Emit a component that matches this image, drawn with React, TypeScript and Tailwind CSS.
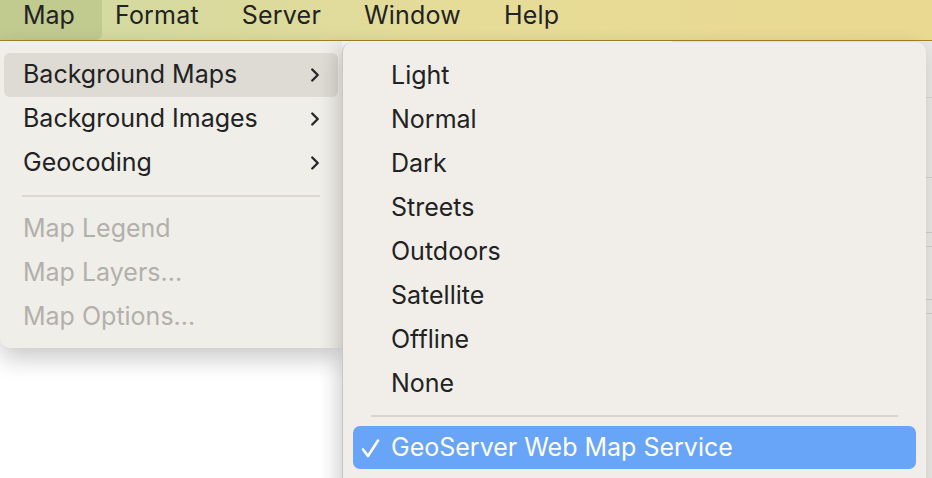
import { ChevronRight } from "lucide-react";

const font = { fontFamily: "Inter, 'Noto Sans', sans-serif" };

const mainItems = [
  { label: "Background Maps", sub: true, active: true },
  { label: "Background Images", sub: true },
  { label: "Geocoding", sub: true },
];

const disabledItems = ["Map Legend", "Map Layers...", "Map Options..."];

const mapStyles = ["Light", "Normal", "Dark", "Streets", "Outdoors", "Satellite", "Offline", "None"];

const MenuBar = () => (
  <div className="flex h-[41px] border-b-[1.5px] border-[#a3812f] bg-gradient-to-r from-[#cfd9a2] via-[#e6dc98] to-[#ead990] text-[25px] text-[#232323]">
    <div className="flex h-full items-center rounded-br-[6px] bg-[#c1ca8f] pb-[9px] pl-[23px] pr-[27px]">Map</div>
    <div className="flex h-full items-center gap-[43px] pb-[9px] pl-[13px] tracking-[0.2px]">
      <span>Format</span>
      <span>Server</span>
      <span>Window</span>
      <span>Help</span>
    </div>
  </div>
);

const Background = () => (
  <div className="flex h-[437px]">
    <div className="flex-1 bg-white" />
    <div className="w-[260px] bg-[#e9e7e3]">
      <div className="h-[57px] border-b border-[#d6d4d0]" />
      <div className="h-[80px] border-b border-[#d2d0cc]" />
      <div className="h-[55px] border-b border-[#cfcdc9]" />
      <div className="h-[14px] border-b border-[#cfcdc9]" />
      <div className="h-[53px] border-b border-[#cfcdc9]" />
      <div className="h-[14px] border-b border-[#cfcdc9]" />
    </div>
  </div>
);

const MainMenu = () => (
  <div className="absolute left-0 top-0 w-[342px] rounded-bl-[10px] bg-[#f0eee9] pb-[9px] pt-[12px] shadow-[0_10px_24px_rgba(0,0,0,0.22)]">
    {mainItems.map((item) => (
      <div
        key={item.label}
        className={`mx-[4px] flex h-[44px] items-center justify-between rounded-[6px] pl-[19px] pr-[12px] ${item.active ? "bg-[#dedad4]" : ""}`}
      >
        <span>{item.label}</span>
        <ChevronRight size={22} strokeWidth={2.6} className="text-[#262626]" />
      </div>
    ))}
    <div className="flex h-[22px] items-center px-[22px]">
      <div className="h-[2px] w-full bg-[#dcd9d4]" />
    </div>
    {disabledItems.map((label) => (
      <div key={label} className="flex h-[44px] items-center pl-[23px] text-[#b2b0ac]">
        {label}
      </div>
    ))}
  </div>
);

const SubMenu = () => (
  <div className="absolute left-[342px] top-[1px] h-[460px] w-[584px] rounded-[10px] border-l border-[#c9c7c3] bg-[#f1eee9] pt-[12px] shadow-[-4px_6px_20px_rgba(0,0,0,0.2)]">
    {mapStyles.map((label) => (
      <div key={label} className="flex h-[44px] items-center pl-[48px]">
        {label}
      </div>
    ))}
    <div className="flex h-[20px] items-center pl-[28px] pr-[28px]">
      <div className="h-[2px] w-full bg-[#d8d5d0]" />
    </div>
    <div className="mx-[10px] flex h-[43px] items-center rounded-[7px] bg-[#68a4f8] text-white">
      <svg width="38" height="24" viewBox="0 0 38 24" className="shrink-0">
        <path d="M10 13.5 L15 20 L25 4.5" fill="none" stroke="white" strokeWidth="2.6" strokeLinecap="round" strokeLinejoin="round" />
      </svg>
      <span>GeoServer Web Map Service</span>
    </div>
  </div>
);

export default function App() {
  return (
    <div className="h-[478px] w-[932px] overflow-hidden bg-white" style={font}>
      <MenuBar />
      <div className="relative text-[25px] text-[#222]">
        <Background />
        <MainMenu />
        <SubMenu />
      </div>
    </div>
  );
}
